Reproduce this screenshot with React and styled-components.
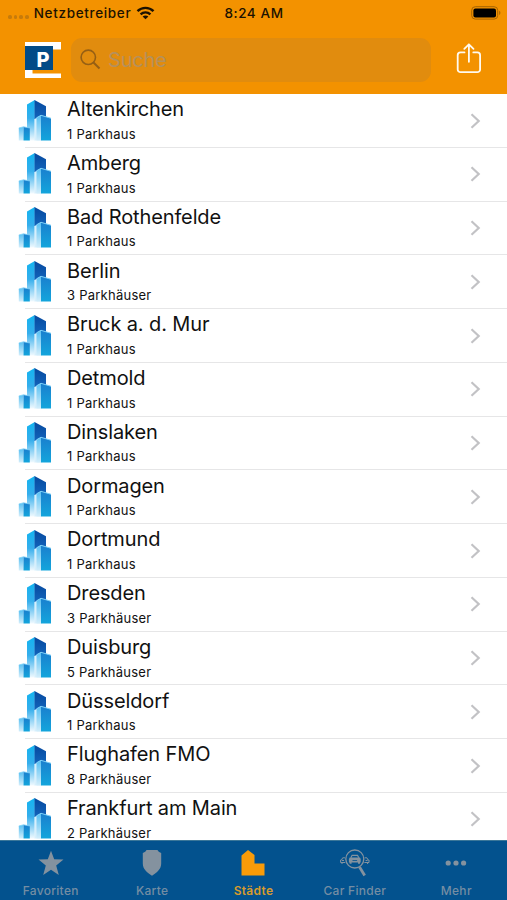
import React from "react";
import styled, { createGlobalStyle } from "styled-components";

const cities = [
  { name: "Altenkirchen", garages: 1 },
  { name: "Amberg", garages: 1 },
  { name: "Bad Rothenfelde", garages: 1 },
  { name: "Berlin", garages: 3 },
  { name: "Bruck a. d. Mur", garages: 1 },
  { name: "Detmold", garages: 1 },
  { name: "Dinslaken", garages: 1 },
  { name: "Dormagen", garages: 1 },
  { name: "Dortmund", garages: 1 },
  { name: "Dresden", garages: 3 },
  { name: "Duisburg", garages: 5 },
  { name: "Düsseldorf", garages: 1 },
  { name: "Flughafen FMO", garages: 8 },
  { name: "Frankfurt am Main", garages: 2 },
];

const WifiIcon = () => (
  <svg width="19" height="14" viewBox="0 0 18 14" fill="none" stroke="#1c1200" strokeWidth="2.4">
    <path d="M1 5.2C5.5 .7 12.5 .7 17 5.2" />
    <path d="M4.1 8.4c2.8-2.7 7-2.7 9.8 0" />
    <path d="M9 13.3 6.1 10.5c1.6-1.5 4.2-1.5 5.8 0z" fill="#1c1200" stroke="none" />
  </svg>
);

const BatteryIcon = () => (
  <svg width="31" height="14" viewBox="0 0 31 14">
    <rect x=".7" y=".7" width="26" height="12.4" rx="3.6" fill="none" stroke="#a66400" strokeWidth="1" />
    <rect x="2.4" y="2.4" width="22.6" height="9" rx="2" fill="#000" />
    <path d="M28.2 4.8c1.6.6 1.6 3.6 0 4.2z" fill="#a66400" />
  </svg>
);

const Logo = () => (
  <svg width="36" height="36" viewBox="0 0 36 36">
    <path d="M0 0h36v7.500H28V4H0zM0 28h7.500v3.500H36V36H0z" fill="#fff" />
    <rect y="4" width="28" height="24" fill="#024b87" />
    <text x="11.500" y="24.500" fill="#fff" fontFamily="Inter, sans-serif" fontSize="20" fontWeight="800" textLength="13" lengthAdjust="spacingAndGlyphs">
      P
    </text>
  </svg>
);

const SearchIcon = () => (
  <svg width="21" height="21" viewBox="0 0 21 21" fill="none" stroke="#955f14" strokeWidth="1.6">
    <circle cx="8.3" cy="8.3" r="7.2" />
    <path d="m13.500 13.500 6 6" strokeWidth="2" />
  </svg>
);

const ShareIcon = () => (
  <svg width="26" height="31" viewBox="0 0 26 31" fill="none" stroke="#fffaf0" strokeWidth="1.8" strokeLinecap="round" strokeLinejoin="round">
    <path d="M8.500 9.400H4.500a2.800 2.800 0 0 0-2.800 2.800v14.200a2.800 2.800 0 0 0 2.800 2.800h16.800a2.800 2.800 0 0 0 2.800-2.800V12.200a2.800 2.800 0 0 0-2.800-2.800h-4" />
    <path d="M12.900 18.800V1.500M8.300 5.900l4.600-4.600 4.600 4.600" />
  </svg>
);

const Skyline = () => (
  <svg width="34" height="43" viewBox="0 0 34 43">
    <defs>
      <linearGradient id="towerLeft" x1="0" y1="0" x2="0" y2="1">
        <stop offset="0" stopColor="#12b4f0" />
        <stop offset=".45" stopColor="#35aeec" />
        <stop offset="1" stopColor="#f1faff" />
      </linearGradient>
      <linearGradient id="towerRight" x1="0" y1="0" x2="0" y2="1">
        <stop offset="0" stopColor="#06499f" />
        <stop offset="1" stopColor="#1264bb" />
      </linearGradient>
      <linearGradient id="front" x1="0" y1="0" x2="0" y2="1">
        <stop offset="0" stopColor="#55bff2" />
        <stop offset="1" stopColor="#d3eefb" />
      </linearGradient>
      <linearGradient id="side" x1="0" y1="0" x2="0" y2="1">
        <stop offset="0" stopColor="#1a7fce" />
        <stop offset="1" stopColor="#13a5dc" />
      </linearGradient>
    </defs>
    <path d="M9 5.500 16.800 1v40.500H9z" fill="url(#towerLeft)" />
    <path d="M16.500 1 28 7.300V20H16.500z" fill="url(#towerRight)" />
    <path d="m16.500 20 7-3.500v25h-7z" fill="#d7effc" />
    <path d="m18.500 18.800 4.500-2.500v25.200h-4.500z" fill="url(#front)" />
    <path d="m23 16.300 10 3v22.200H23z" fill="url(#side)" />
    <path d="m18.500 18.800 4.500-2.500 10 3" fill="none" stroke="#7fd2f8" strokeWidth="1" />
    <path d="m.8 29 4.700-1.200v13.700H.8z" fill="url(#front)" />
    <path d="m5.500 27.800 6.300 1.200v12.500H5.500z" fill="url(#side)" />
    <path d="m.8 29 4.700-1.200 6.300 1.200" fill="none" stroke="#7fd2f8" strokeWidth=".8" />
  </svg>
);

const Chevron = () => (
  <svg width="11" height="16" viewBox="0 0 11 16" fill="none" stroke="#c2c2c5" strokeWidth="2.200">
    <path d="m1.500 1.300 7.200 6.700-7.200 6.700" />
  </svg>
);

const StarIcon = () => (
  <svg width="26" height="26" viewBox="0 0 26 26" fill="currentColor">
    <path d="m13 .8 3.200 8.500 9.300.3-7.300 5.800 2.600 9.600L13 19.700 5.200 25l2.600-9.600L.5 9.600l9.300-.3z" />
  </svg>
);

const ShieldIcon = () => (
  <svg width="20" height="26" viewBox="0 0 20 26" fill="currentColor">
    <path d="M4.500 0h11c1 1.700 2.300 2.600 3.700 3v10.500c0 6-4.300 8.700-9.200 12.300C5.100 22.200.8 19.500.8 13.500V3C2.200 2.600 3.500 1.700 4.500 0z" />
  </svg>
);

const CityIcon = () => (
  <svg width="24" height="26" viewBox="0 0 24 26" fill="currentColor">
    <path d="M.5 5.500 7 0l6.500 5v8.500h10V25.500H.5z" />
  </svg>
);

const FinderIcon = () => (
  <svg width="30" height="28" viewBox="0 0 30 28" fill="none" stroke="currentColor" strokeWidth="1">
    <circle cx="14.800" cy="10" r="9" strokeWidth="1.300" />
    <path d="m19.500 18 5.200 8.500" strokeWidth="2.800" />
    <path d="m10.800 8.800 1.300-2.500h5.400l1.300 2.500" strokeWidth="1.200" />
    <path d="M9.700 8.600h10.200l.8 1.500v3.300H8.900v-3.300z" fill="currentColor" stroke="none" />
    <path d="M10.600 13v1.700M19 13v1.700" strokeWidth="2" />
    <path d="M12.500 11.500h4.600" stroke="#03528e" strokeWidth=".8" />
    <path d="M5 8.800H2.700L1.500 11H.6v2.500h4.600M24.600 8.800h2.300l1.200 2.200h.9v2.500h-4.600M2 13.500V15M27.600 13.500V15M2 11.500h2M25.600 11.500h2" />
  </svg>
);

const MoreIcon = () => (
  <svg width="22" height="8" viewBox="0 0 22 8" fill="currentColor">
    <circle cx="3.200" cy="4" r="2.600" />
    <circle cx="11" cy="4" r="2.600" />
    <circle cx="18.600" cy="4" r="2.600" />
  </svg>
);

const tabs = [
  { label: "Favoriten", icon: <StarIcon /> },
  { label: "Karte", icon: <ShieldIcon /> },
  { label: "Städte", icon: <CityIcon />, active: true },
  { label: "Car Finder", icon: <FinderIcon /> },
  { label: "Mehr", icon: <MoreIcon /> },
];

const App = () => {
  return (
    <Screen>
      <GlobalStyle />
      <Header>
        <StatusBar>
          <Carrier>
            <Signal>
              <i />
              <i />
              <i />
              <i />
            </Signal>
            <span>Netzbetreiber</span>
            <WifiIcon />
          </Carrier>
          <Time>8:24 AM</Time>
          <BatteryIcon />
        </StatusBar>
        <NavBar>
          <Logo />
          <SearchField>
            <SearchIcon />
            <span>Suche</span>
          </SearchField>
          <ShareIcon />
        </NavBar>
      </Header>
      <CityList>
        {cities.map(({ name, garages }) => (
          <CityRow key={name}>
            <Skyline />
            <CityText>
              <h2>{name}</h2>
              <p>
                {garages} {garages === 1 ? "Parkhaus" : "Parkhäuser"}
              </p>
            </CityText>
            <Chevron />
          </CityRow>
        ))}
      </CityList>
      <TabBar>
        {tabs.map(({ label, icon, active }) => (
          <Tab key={label} $active={active}>
            <div className="icon">{icon}</div>
            <span>{label}</span>
          </Tab>
        ))}
      </TabBar>
    </Screen>
  );
};

const GlobalStyle = createGlobalStyle`
  * {
    box-sizing: border-box;
  }
  body {
    margin: 0;
    font-family: Inter, "Liberation Sans", sans-serif;
  }
  svg {
    display: block;
    flex-shrink: 0;
  }
`;

const Screen = styled.div`
  display: flex;
  flex-direction: column;
  width: 507px;
  height: 900px;
  overflow: hidden;
  background: #fff;
`;

const Header = styled.header`
  flex: 0 0 94px;
  background: #f39200;
`;

const StatusBar = styled.div`
  display: grid;
  grid-template-columns: 1fr auto 1fr;
  align-items: center;
  height: 26px;
  padding: 0 5px 0 8px;
  color: #1c1200;
  font-size: 13.500px;
  font-weight: 500;
  > svg {
    justify-self: end;
  }
`;

const Carrier = styled.div`
  display: flex;
  align-items: center;
  span {
    margin: 0 5px 0 5px;
    letter-spacing: 0.66px;
  }
`;

const Signal = styled.div`
  display: flex;
  gap: 2px;
  margin-top: 8px;
  i {
    width: 3.700px;
    height: 3.700px;
    border-radius: 50%;
    background: #c67b0b;
  }
`;

const Time = styled.div`
  padding-right: 2px;
  letter-spacing: 0.6px;
`;

const NavBar = styled.div`
  display: flex;
  align-items: center;
  height: 67.500px;
  padding: 0 25px 0 25px;
  > svg:last-child {
    margin-bottom: 2px;
  }
`;

const SearchField = styled.div`
  display: flex;
  align-items: center;
  width: 360px;
  height: 44px;
  margin: 0 25px 0 10px;
  padding-left: 9px;
  border-radius: 11px;
  background: #e18c0e;
  span {
    margin-left: 7px;
    color: #b5905b;
    font-size: 20px;
    letter-spacing: -0.2px;
  }
`;

const CityList = styled.div`
  flex: 1;
  overflow: hidden;
`;

const CityRow = styled.div`
  display: flex;
  align-items: flex-start;
  height: 53.770px;
  padding: 4.500px 26px 0 18px;
  background: linear-gradient(#e6e6e7, #e6e6e7) 25px 100% / 100% 1px no-repeat;
  > svg:last-child {
    margin-top: 14px;
  }
`;

const CityText = styled.div`
  flex: 1;
  margin-left: 15px;
  color: #111;
  h2 {
    margin: -2.300px 0 0;
    font-size: 20px;
    font-weight: 400;
    line-height: 26px;
    letter-spacing: -0.12px;
  }
  p {
    margin: 2.700px 0 0;
    font-size: 13px;
    line-height: 18px;
    letter-spacing: 0.24px;
  }
`;

const TabBar = styled.nav`
  display: grid;
  grid-template-columns: repeat(5, 1fr);
  flex: 0 0 60px;
  border-top: 1px solid #3b7799;
  background: #03528e;
`;

const Tab = styled.div`
  display: flex;
  flex-direction: column;
  align-items: center;
  color: ${({ $active }) => ($active ? "#f99b08" : "#84929f")};
  .icon {
    display: flex;
    align-items: center;
    height: 28px;
    margin-top: 8px;
  }
  span {
    margin-top: 5px;
    color: ${({ $active }) => ($active ? "#d79b2e" : "#748da3")};
    font-size: 12px;
    font-weight: ${({ $active }) => ($active ? 600 : 500)};
    line-height: 18px;
    letter-spacing: 0.3px;
  }
`;

export default App;
